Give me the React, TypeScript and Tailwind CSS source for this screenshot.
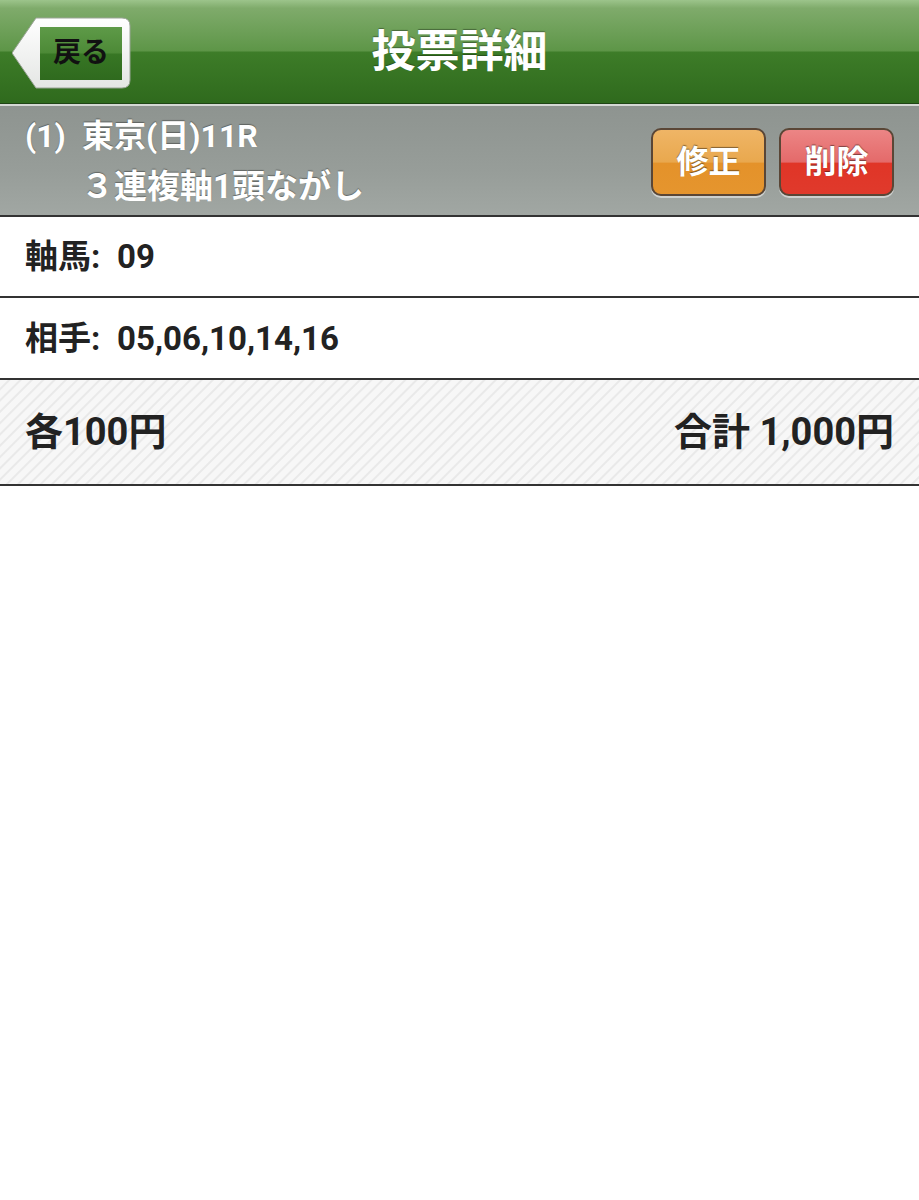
import React from 'react';

const font = { fontFamily: 'Roboto, "Noto Sans CJK JP", sans-serif' };

function BackButton() {
  return (
    <button className="relative w-[119px] h-[72px] flex items-center" type="button">
      {/* white tag shape */}
      <svg className="absolute inset-0" width="119" height="72" viewBox="0 0 119 72">
        <defs>
          <linearGradient id="tag" x1="0" y1="0" x2="0" y2="1">
            <stop offset="0" stopColor="#ffffff" />
            <stop offset="1" stopColor="#e4e6e4" />
          </linearGradient>
        </defs>
        <path d="M0 36 L24 1 L110 1 Q118 1 118 9 L118 63 Q118 71 110 71 L24 71 Z" fill="url(#tag)" stroke="#9aa496" strokeWidth="1" />
      </svg>
      <div className="relative ml-[28px] w-[82px] h-[53px] flex items-center justify-center bg-[linear-gradient(to_bottom,#5e9a48_0%,#4d8a37_48%,#377624_52%,#2f6a1e_100%)]">
        <span className="text-[28px] font-bold text-[#111] leading-none">戻る</span>
      </div>
    </button>
  );
}

function ActionButton({ label, tone }: { label: string; tone: 'orange' | 'red' }) {
  const bg =
    tone === 'orange'
      ? 'bg-[linear-gradient(to_bottom,#efb566_0%,#e9a84e_50%,#e4922a_52%,#e5952e_100%)]'
      : 'bg-[linear-gradient(to_bottom,#ec8585_0%,#e46a6a_50%,#e03527_52%,#e03a2c_100%)]';
  return (
    <button
      type="button"
      className={`w-[115px] h-[68px] rounded-[10px] border-2 border-[#5a4636] flex items-center justify-center shadow-[0_2px_0_rgba(255,255,255,0.5)] ${bg}`}
    >
      <span className="text-[32px] font-bold text-white leading-none [text-shadow:0_-1px_1px_rgba(0,0,0,0.45)]">{label}</span>
    </button>
  );
}

export default function App() {
  return (
    <div className="w-[919px] min-h-[1200px] bg-white" style={font}>
      {/* Title bar */}
      <div className="relative h-[103px] flex items-center justify-center bg-[linear-gradient(to_bottom,#9cc48b_0%,#7fab6b_8%,#5e9648_49%,#3d7c28_51%,#2f6a1d_100%)]">
        <div className="absolute left-[12px] top-[17px]">
          <BackButton />
        </div>
        <h1 className="text-[44px] font-bold text-white leading-none [text-shadow:0_-1px_1px_rgba(0,0,0,0.35)]">投票詳細</h1>
      </div>
      <div className="h-[1px] bg-[#1f4515]" />
      <div className="h-[2px] bg-[#d5d9d5]" />

      {/* Bet summary band */}
      <div className="h-[111px] flex items-center justify-between pl-[25px] pr-[25px] border-b-2 border-[#333] bg-[linear-gradient(to_bottom,#8e9490_0%,#979d99_60%,#a1a7a3_100%)]">
        <div className="text-white font-bold leading-none [text-shadow:0_-1px_1px_rgba(0,0,0,0.35)]">
          <div className="text-[32px] mt-[2px]">(1)&ensp;東京(日)11R</div>
          <div className="text-[33px] pl-[56px] mt-[18px]">３連複軸1頭ながし</div>
        </div>
        <div className="flex gap-[13px] mt-[2px]">
          <ActionButton label="修正" tone="orange" />
          <ActionButton label="削除" tone="red" />
        </div>
      </div>

      {/* Detail rows */}
      <div className="h-[81px] flex items-center px-[25px] border-b-2 border-[#333]">
        <span className="text-[33px] font-bold text-[#222] leading-none">軸馬:&ensp;09</span>
      </div>
      <div className="h-[82px] flex items-center px-[25px] border-b-2 border-[#333]">
        <span className="text-[33px] font-bold text-[#222] leading-none">相手:&ensp;05,06,10,14,16</span>
      </div>

      {/* Totals */}
      <div className="h-[106px] flex items-center justify-between px-[25px] border-b-2 border-[#333] bg-[repeating-linear-gradient(135deg,#f7f7f7_0px,#f7f7f7_5px,#e9e9e9_6px,#e9e9e9_7px,#f7f7f7_8px)]">
        <span className="text-[38px] font-bold text-[#222] leading-none">各100円</span>
        <span className="text-[38px] font-bold text-[#222] leading-none">合計 1,000円</span>
      </div>
    </div>
  );
}
